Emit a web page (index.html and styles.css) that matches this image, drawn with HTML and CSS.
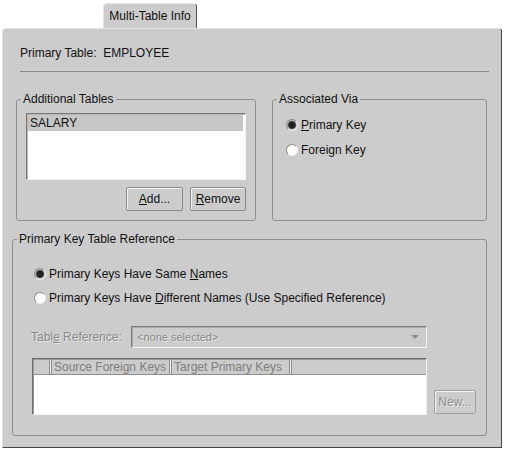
FILE: index.html
```html
<!DOCTYPE html>
<html>
<head>
<meta charset="utf-8">
<link rel="stylesheet" href="styles.css">
</head>
<body>
<div class="tabs"><div class="tab">Multi-Table Info</div></div>
<div class="panel">
  <div class="primary-line">Primary Table:&nbsp; EMPLOYEE</div>
  <div class="sep"></div>
  <div class="groups">
    <fieldset class="group g-tables">
      <legend>Additional Tables</legend>
      <div class="list"><div class="list-row sel">SALARY</div></div>
      <div class="btn-row">
        <button class="btn btn-add"><u>A</u>dd...</button>
        <button class="btn btn-remove"><u>R</u>emove</button>
      </div>
    </fieldset>
    <fieldset class="group g-via">
      <legend>Associated Via</legend>
      <div class="radio-row"><span class="radio on"></span><span><u>P</u>rimary Key</span></div>
      <div class="radio-row"><span class="radio"></span><span>Foreign Key</span></div>
    </fieldset>
  </div>
  <fieldset class="group g-ref">
    <legend>Primary Key Table Reference</legend>
    <div class="radio-row"><span class="radio on"></span><span>Primary Keys Have Same <u>N</u>ames</span></div>
    <div class="radio-row"><span class="radio"></span><span>Primary Keys Have <u>D</u>ifferent Names (Use Specified Reference)</span></div>
    <div class="combo-row">
      <span class="combo-label disabled">Tabl<u>e</u> Reference:</span>
      <div class="combo"><span class="combo-text">&lt;none selected&gt;</span><span class="combo-arrow"></span></div>
    </div>
    <div class="table-row">
      <div class="grid">
        <div class="grid-head">
          <div class="hcell c0"></div>
          <div class="hcell c1">Source Foreign Keys</div>
          <div class="hcell c2">Target Primary Keys</div>
          <div class="hcell c3"></div>
        </div>
        <div class="grid-body"></div>
      </div>
      <button class="btn btn-new" disabled>New...</button>
    </div>
  </fieldset>
</div>
</body>
</html>
```
FILE: styles.css
```css
* { box-sizing: border-box; }
html, body {
  margin: 0;
  padding: 0;
  background: #ffffff;
}
body {
  width: 506px;
  height: 451px;
  font-family: "Liberation Sans", Arial, sans-serif;
  font-size: 12px;
  color: #111;
  line-height: 14px;
}
u { text-decoration: underline; text-underline-offset: 1px; }

.tabs {
  height: 28px;
  padding-top: 3px;
  padding-left: 103px;
}
.tab {
  width: 94px;
  height: 25px;
  background: #cccccc;
  border-top: 1px solid #e4e4e4;
  border-left: 1px solid #e4e4e4;
  border-right: 1px solid #555;
  border-radius: 4px 4px 0 0;
  text-align: center;
  padding-top: 5px;
}

.panel {
  margin-left: 2px;
  width: 500px;
  height: 420px;
  background: #cccccc;
  border-top: 1px solid #e4e4e4;
  border-left: 1px solid #e4e4e4;
  border-right: 1px solid #444;
  border-bottom: 1px solid #444;
  border-radius: 4px 3px 0 0;
}

.primary-line {
  margin: 17px 0 0 17px;
}
.sep {
  margin: 11px 0 0 17px;
  width: 469px;
  height: 1px;
  background: #8a8a8a;
}

.groups {
  display: flex;
  align-items: stretch;
  margin-top: 20px;
}

.group {
  margin: 0;
  padding: 0;
  min-width: 0;
  border: 1px solid #8e8e8e;
  border-radius: 3px;
}
.group legend {
  padding: 0 2px;
  margin-left: 4px;
  line-height: 14px;
}

.g-tables {
  margin-left: 13px;
  width: 240px;
  padding: 7px 9px 9px 9px;
}
.g-tables legend { margin-left: -5px; }
.g-via {
  margin-left: 16px;
  width: 215px;
  padding: 6px 0 0 13px;
}
.g-via legend { margin-left: -9px; }

.list {
  width: 220px;
  height: 67px;
  background: #fff;
  border-top: 1px solid #777;
  border-left: 1px solid #777;
  border-right: 1px solid #f4f4f4;
  border-bottom: 1px solid #f4f4f4;
  box-shadow: inset 1px 1px 0 #b8b8b8;
  padding: 1px 2px 0 1px;
}
.list-row {
  height: 16px;
  line-height: 16px;
  padding-left: 2px;
}
.list-row.sel { background: #c6c6c6; }

.btn-row {
  display: flex;
  justify-content: flex-end;
  gap: 7px;
  margin-top: 7px;
}
.btn {
  height: 24px;
  padding: 0;
  font-family: inherit;
  font-size: 12px;
  color: #111;
  background: #cccccc;
  border: 1px solid #8a8a8a;
  border-radius: 2px;
  box-shadow: inset 1px 1px 0 #f4f4f4;
}
.btn-add { width: 57px; }
.btn-remove { width: 56px; }

.radio-row {
  display: flex;
  align-items: center;
  height: 25px;
  gap: 3px;
}
.radio {
  width: 12px;
  height: 12px;
  border-radius: 50%;
  background: #fff;
  border: 1px solid;
  border-color: #8a8a8a #f0f0f0 #f0f0f0 #8a8a8a;
  flex: none;
}
.radio.on {
  background: radial-gradient(circle at 50% 50%, #222 0 3.2px, #666 3.8px, #bdbdbd 4.6px);
}

.g-ref {
  margin: 11px 0 0 9px;
  width: 475px;
  padding: 16px 0 20px 0;
}
.g-ref .radio-row {
  height: 24px;
  margin-left: 21px;
}

.combo-row {
  display: flex;
  align-items: center;
  margin: 16px 0 0 18px;
  height: 22px;
}
.disabled { color: #8a8a8a; text-shadow: 1px 1px 0 #e6e6e6; }
.combo-label { width: 100px; }
.combo {
  width: 296px;
  height: 22px;
  display: flex;
  align-items: center;
  justify-content: space-between;
  background: #cccccc;
  border: 1px solid;
  border-color: #7c7c7c #f2f2f2 #f2f2f2 #7c7c7c;
  box-shadow: inset 1px 1px 0 #a8a8a8;
  padding: 0 7px 0 5px;
}
.combo-text { color: #8a8a8a; font-size: 11px; text-shadow: 1px 1px 0 #e6e6e6; }
.combo-arrow {
  width: 0;
  height: 0;
  border-left: 4px solid transparent;
  border-right: 4px solid transparent;
  border-top: 4px solid #8e8e8e;
}

.table-row {
  display: flex;
  align-items: flex-end;
  margin: 10px 0 0 19px;
}
.grid {
  width: 395px;
  height: 57px;
  background: #fff;
  border: 1px solid;
  border-color: #6e6e6e #f2f2f2 #f2f2f2 #6e6e6e;
  box-shadow: inset 1px 1px 0 #9a9a9a;
  padding: 1px 0 0 1px;
  display: flex;
  flex-direction: column;
}
.grid-head {
  display: flex;
  height: 15px;
  background: #eeeeee;
  border-bottom: 1px solid #8e8e8e;
}
.hcell {
  background: #cccccc;
  color: #7e7e7e;
  line-height: 14px;
  border-right: 1px solid #8e8e8e;
  padding-left: 2px;
  white-space: nowrap;
}
.hcell + .hcell {
  margin-left: 1px;
  border-left: 1px solid #8e8e8e;
}
.c0 { width: 16px; }
.c1 { width: 119px; }
.c2 { width: 119px; }
.c3 { flex: 1; border-right: none; }
.grid-body { flex: 1; background: #fff; }

.btn-new {
  width: 42px;
  margin: 0 0 1px 7px;
  color: #909090;
  text-shadow: 1px 1px 0 #eaeaea;
  border-color: #a0a0a0;
}
```
